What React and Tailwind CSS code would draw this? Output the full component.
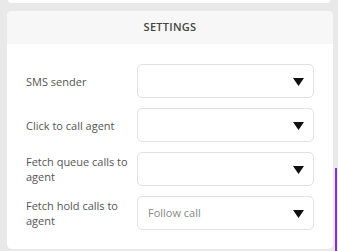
export default function App() {
  const rows = [
    { label: 'SMS sender', value: '' },
    { label: 'Click to call agent', value: '' },
    { label: 'Fetch queue calls to agent', value: '' },
    { label: 'Fetch hold calls to agent', value: 'Follow call' },
  ];

  return (
    <div
      className="relative h-[251px] w-[338px] overflow-hidden bg-[#e9e9e9]"
      style={{ fontFamily: '"Open Sans", sans-serif' }}
    >
      {/* bottom edge of the card above */}
      <div className="mx-[8px] h-[3px] rounded-b-[4px] bg-white" />

      <div className="ml-[7px] mt-[8px] w-[326px] overflow-hidden rounded-[5px] bg-white">
        <div className="flex h-[33px] items-center justify-center bg-[#f7f7f7] text-[11px] font-semibold tracking-wide text-[#444]">
          SETTINGS
        </div>
        <div className="flex flex-col gap-[10px] px-[19px] pb-[19px] pt-[20px]">
          {rows.map((r) => (
            <div key={r.label} className="flex items-center">
              <div className="w-[111px] pr-2 text-[11px] leading-[15px] text-[#555]">{r.label}</div>
              <div className="flex h-[34px] flex-1 items-center justify-between rounded-[5px] border border-[#e2e2e2] pl-[10px] pr-[9px]">
                <span className="text-[11px] text-[#888]">{r.value}</span>
                <svg width="11" height="8" viewBox="0 0 11 8" className="mt-[1px]">
                  <polygon points="0,0 11,0 5.5,8" fill="#111" />
                </svg>
              </div>
            </div>
          ))}
        </div>
      </div>

      <div className="absolute right-[1px] top-[168px] h-[83px] w-[2px] bg-[#8b2be0]" />
    </div>
  );
}
